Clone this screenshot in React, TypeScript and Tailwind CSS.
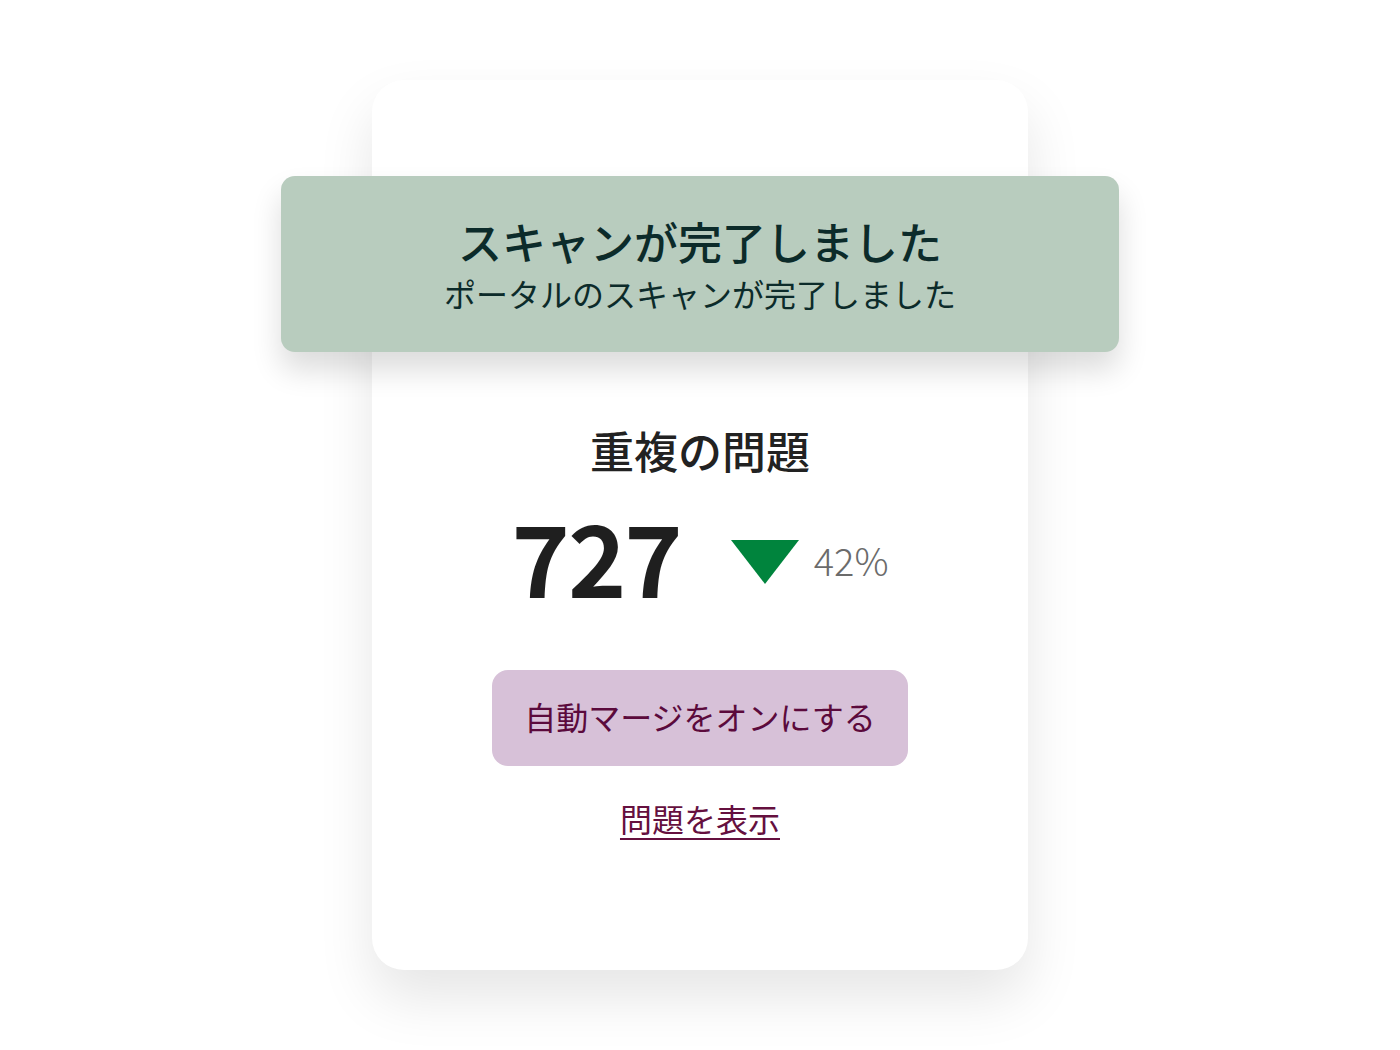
import React from 'react';

const font = { fontFamily: '"Noto Sans CJK JP", "Noto Sans", sans-serif' };

export default function App() {
  return (
    <div className="min-h-screen w-full bg-white flex justify-center pt-[80px]" style={font}>
      <div className="w-[656px] h-[890px] bg-white rounded-[32px] shadow-[0_28px_56px_rgba(0,0,0,0.10)] flex flex-col items-center pt-[96px]">
        {/* Scan complete toast */}
        <div className="w-[838px] h-[176px] shrink-0 bg-[#b8ccbe] rounded-[14px] shadow-[0_18px_30px_rgba(0,0,0,0.14)] flex flex-col items-center justify-center">
          <h2 className="text-[44px] leading-[58px] font-medium text-[#0c2b2a]">スキャンが完了しました</h2>
          <p className="text-[32px] leading-[46px] text-[#0c2b2a]">ポータルのスキャンが完了しました</p>
        </div>

        <h3 className="mt-[71px] text-[44px] leading-[54px] font-medium text-[#222222]">重複の問題</h3>

        <div className="mt-[26px] flex items-center h-[104px]">
          <span className="text-[99px] leading-none font-bold text-[#1f1f1f] tracking-[-2px]">727</span>
          <svg className="ml-[50px] mt-[14px]" width="68" height="44" viewBox="0 0 68 44">
            <polygon points="0,0 68,0 34,44" fill="#00843d" />
          </svg>
          <span className="ml-[15px] mt-[10px] text-[38px] leading-none text-[#6b6b6b] font-light">42%</span>
        </div>

        <button className="mt-[63px] w-[416px] h-[96px] rounded-[16px] bg-[#d7c1d8] text-[32px] leading-[40px] pb-[4px] text-[#5b0a3c]">
          自動マージをオンにする
        </button>

        <a href="#" className="mt-[28px] text-[32px] leading-[48px] text-[#65103f] underline underline-offset-[6px] decoration-[2px]">
          問題を表示
        </a>
      </div>
    </div>
  );
}
